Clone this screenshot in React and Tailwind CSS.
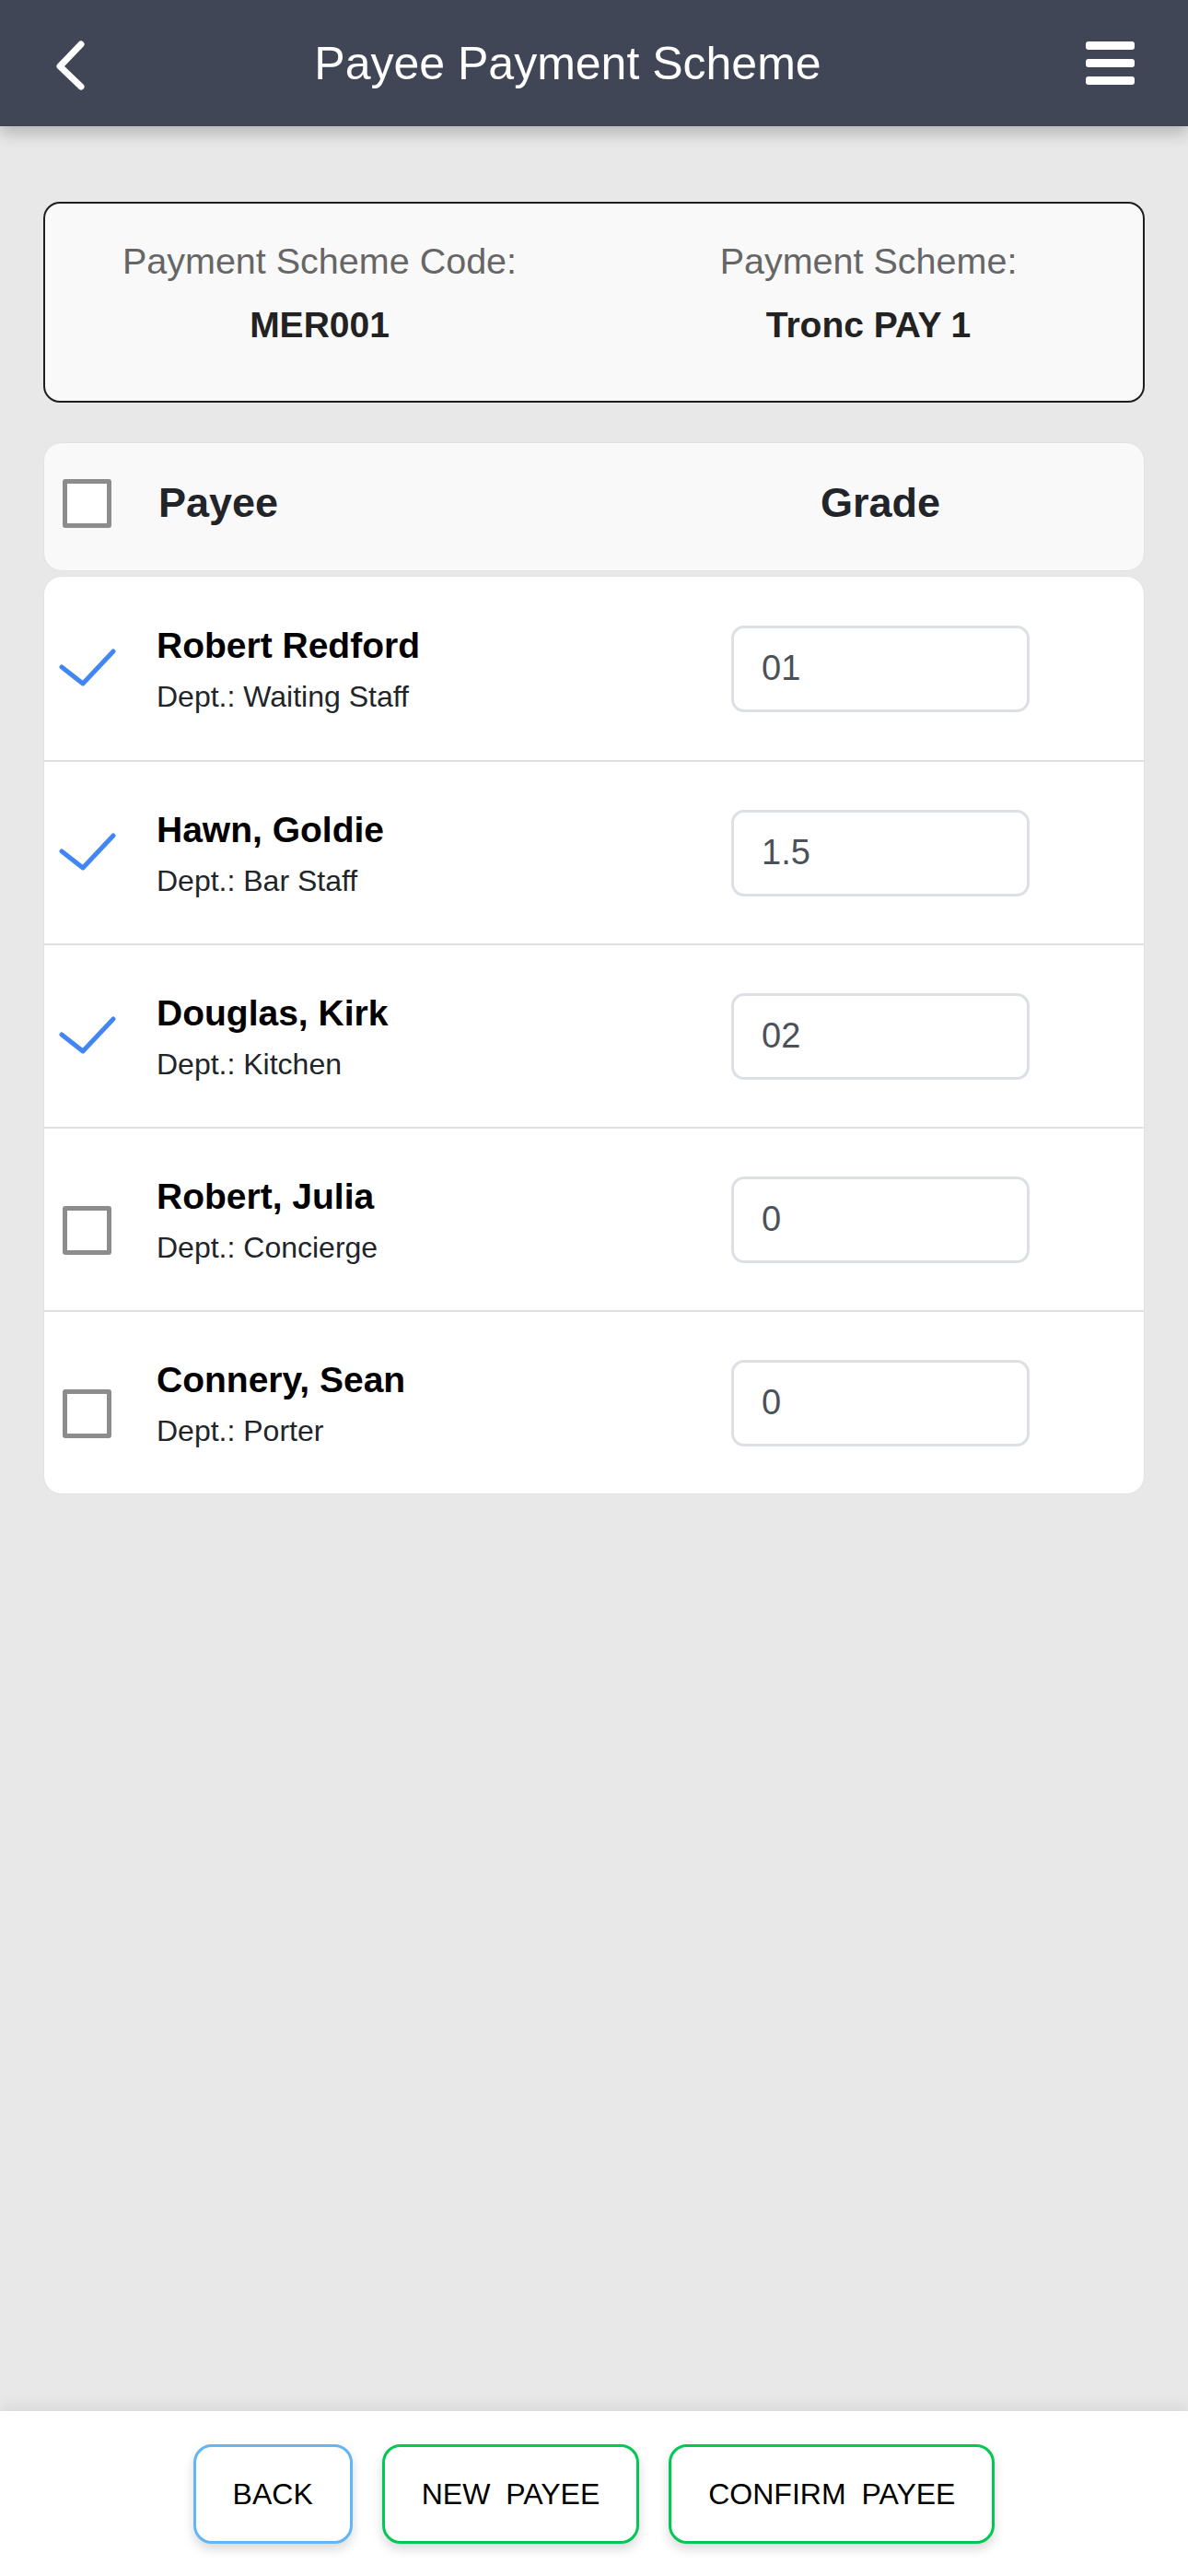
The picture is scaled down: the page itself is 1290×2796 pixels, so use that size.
import React, { useState } from "react";

const initialPayees = [
	{ name: "Robert Redford", dept: "Waiting Staff", grade: "01", checked: true },
	{ name: "Hawn, Goldie", dept: "Bar Staff", grade: "1.5", checked: true },
	{ name: "Douglas, Kirk", dept: "Kitchen", grade: "02", checked: true },
	{ name: "Robert, Julia", dept: "Concierge", grade: "0", checked: false },
	{ name: "Connery, Sean", dept: "Porter", grade: "0", checked: false },
];

const Tick = () => (
	<svg width="62" height="44" viewBox="0 0 62 44" className="block">
		<polyline
			points="3,20 26,38 59,3"
			fill="none"
			stroke="#4285f4"
			strokeWidth="5"
			strokeLinecap="round"
			strokeLinejoin="round"
		/>
	</svg>
);

const Box = ({ className = "" }) => (
	<div className={"w-[53px] h-[53px] border-[5px] border-[#8c8c8c] rounded-[3px] bg-white " + className}></div>
);

const App = () => {
	const [payees, setPayees] = useState(initialPayees);

	const toggle = (i) => {
		setPayees(payees.map((p, idx) => (idx === i ? { ...p, checked: !p.checked } : p)));
	};

	const setGrade = (i, value) => {
		setPayees(payees.map((p, idx) => (idx === i ? { ...p, grade: value } : p)));
	};

	return (
		<div className="h-screen flex flex-col bg-[#e8e8e8] font-['Liberation_Sans',Arial,sans-serif]">
			{/* header */}
			<div className="relative z-10 h-[137px] shrink-0 bg-[#404656] flex items-center justify-between px-[58px] shadow-[0_8px_16px_rgba(0,0,0,0.22)]">
				<svg width="40" height="60" viewBox="0 0 40 60">
					<polyline
						points="30,9 7,33 30,55"
						fill="none"
						stroke="white"
						strokeWidth="7"
						strokeLinecap="round"
						strokeLinejoin="round"
					/>
				</svg>
				<h1 className="mr-[44px] text-white text-[50px] leading-[56px]">Payee Payment Scheme</h1>
				<div className="flex flex-col gap-[10px] w-[53px]">
					<span className="block h-[9px] rounded-[3px] bg-white"></span>
					<span className="block h-[9px] rounded-[3px] bg-white"></span>
					<span className="block h-[9px] rounded-[3px] bg-white"></span>
				</div>
			</div>

			{/* content */}
			<div className="flex-1 px-[47px] pt-[82px]">
				<div className="border-2 border-[#1e1e1e] rounded-[18px] bg-[#f9f9f9] pt-[40px] pb-[60px] grid grid-cols-2 text-center">
					<div>
						<p className="text-[39.5px] leading-[45px] text-[#666666]">Payment Scheme Code:</p>
						<p className="mt-[24px] text-[39px] leading-[45px] font-bold text-[#222222]">MER001</p>
					</div>
					<div>
						<p className="text-[39.5px] leading-[45px] text-[#666666]">Payment Scheme:</p>
						<p className="mt-[24px] text-[39px] leading-[45px] font-bold text-[#222222]">Tronc PAY 1</p>
					</div>
				</div>

				<div className="mt-[43px] h-[140px] bg-[#f9f9f9] border border-[#e2e2e2] rounded-[20px] flex items-center pl-[20px] pr-[124px] pb-[8px]">
					<Box />
					<span className="ml-[51px] flex-1 text-[45px] leading-[52px] font-bold text-[#212529]">Payee</span>
					<span className="w-[324px] text-center text-[45px] leading-[52px] font-bold text-[#212529]">Grade</span>
				</div>

				<div className="mt-[5px] bg-white rounded-[20px] border border-[#e2e2e2] overflow-hidden">
					{payees.map((p, i) => (
						<div
							key={p.name}
							className={
								"h-[199px] flex items-center pl-[16px] pr-[124px] " +
								(i > 0 ? "border-t-2 border-[#e0e0e0]" : "")
							}
						>
							<button className="w-[62px] flex justify-start" onClick={() => toggle(i)}>
								{p.checked ? <Tick /> : <Box className="ml-[4px] mt-[24px]" />}
							</button>
							<div className="ml-[44px] flex-1">
								<p className="text-[39px] font-bold text-black leading-[45px]">{p.name}</p>
								<p className="mt-[16px] text-[32px] text-[#212529] leading-[35px]">Dept.: {p.dept}</p>
							</div>
							<input
								className="w-[324px] h-[94px] border-[3px] border-[#dcdfe3] rounded-[14px] pl-[30px] text-[38px] text-[#4b5158] outline-none bg-white"
								value={p.grade}
								onChange={(e) => setGrade(i, e.target.value)}
							/>
						</div>
					))}
				</div>
			</div>

			{/* footer */}
			<div className="h-[179px] shrink-0 bg-white flex items-center justify-center gap-[32px] shadow-[0_-6px_16px_rgba(0,0,0,0.07)] relative z-10">
				<button className="h-[108px] px-[40px] border-[3px] border-[#64b5f6] rounded-[20px] bg-white text-[32px] text-black shadow-[0_6px_12px_rgba(0,0,0,0.15)]">
					BACK
				</button>
				<button className="h-[108px] px-[40px] border-[3px] border-[#00c853] rounded-[20px] bg-white text-[32px] text-black [word-spacing:8px] shadow-[0_6px_12px_rgba(0,0,0,0.15)]">
					NEW PAYEE
				</button>
				<button className="h-[108px] px-[40px] border-[3px] border-[#00c853] rounded-[20px] bg-white text-[32px] text-black [word-spacing:8px] shadow-[0_6px_12px_rgba(0,0,0,0.15)]">
					CONFIRM PAYEE
				</button>
			</div>
		</div>
	);
};

export default App;
